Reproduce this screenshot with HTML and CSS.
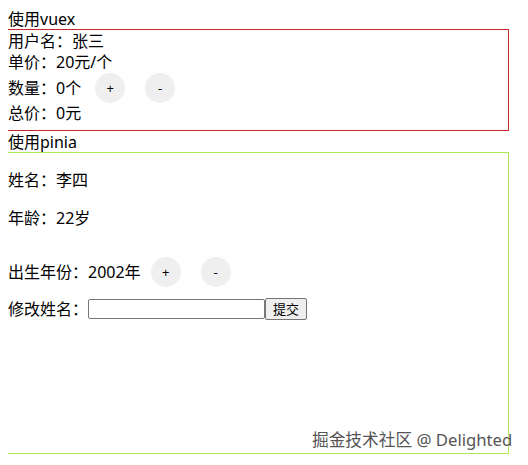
FILE: index.html
```html
<!DOCTYPE html>
<html lang="zh-CN">

<head>
    <meta charset="UTF-8">
    <meta name="viewport" content="width=device-width, initial-scale=1.0">
    <title>vuex / pinia</title>
    <link rel="stylesheet" href="styles.css">
</head>

<body>

    <div class="title">使用vuex</div>
    <div class="box vuex-box">
        <div>用户名：张三</div>
        <div>单价：20元/个</div>
        <div class="row">
            <span class="label wide">数量：0个</span>
            <button class="circle-btn">+</button>
            <button class="circle-btn">-</button>
        </div>
        <div>总价：0元</div>
    </div>

    <div class="title">使用pinia</div>
    <div class="box pinia-box">
        <p>姓名：李四</p>
        <p>年龄：22岁</p>
        <div class="row spaced">
            <span class="label">出生年份：2002年</span>
            <button class="circle-btn">+</button>
            <button class="circle-btn">-</button>
        </div>
        <div class="edit">
            修改姓名：<input type="text"><button class="submit">提交</button>
        </div>
    </div>

    <div class="watermark">掘金技术社区 @ Delighted</div>

</body>

</html>
```

FILE: styles.css
```css
body {
    font-family: "Noto Sans", "Noto Sans CJK SC", sans-serif;
    font-size: 16px;
    line-height: 21px;
    color: #000;
    margin: 8px;
}

.title {
    height: 20px;
    padding-top: 1px;
}

.box {
    width: 500px;
    margin-left: -1px;
}

.vuex-box {
    border: 1px solid #c9262b;
    padding: 1px 0 6px;
}

.pinia-box {
    border: 1px solid #aee84f;
    height: 300px;
}

.pinia-box p {
    margin: 17px 0 16px;
}

.row {
    display: flex;
    align-items: center;
    height: 30px;
}

.row.spaced {
    padding: 12px 0 8px;
}

.label.wide {
    margin-right: 4px;
}

.circle-btn {
    width: 30px;
    height: 30px;
    margin: 0 10px;
    padding: 0;
    border: none;
    border-radius: 50%;
    background-color: #efefef;
    font-family: "Noto Sans", sans-serif;
    font-size: 13px;
    color: #000;
}

.edit {
    display: flex;
    align-items: center;
    height: 28px;
}

.edit input {
    width: 171px;
    height: 16px;
    padding: 1px 2px;
    border: 1px solid #767676;
    border-radius: 2px;
    font-size: 13px;
}

.submit {
    height: 22px;
    padding: 0 7px;
    border: 1px solid #767676;
    border-radius: 2px;
    background-color: #efefef;
    font-family: "Noto Sans CJK SC", sans-serif;
    font-size: 13px;
    line-height: 18px;
}

.watermark {
    position: absolute;
    left: 312px;
    top: 429px;
    font-size: 16.7px;
    color: #555;
    text-shadow: 0 0 2px #fff;
    white-space: nowrap;
}
```
